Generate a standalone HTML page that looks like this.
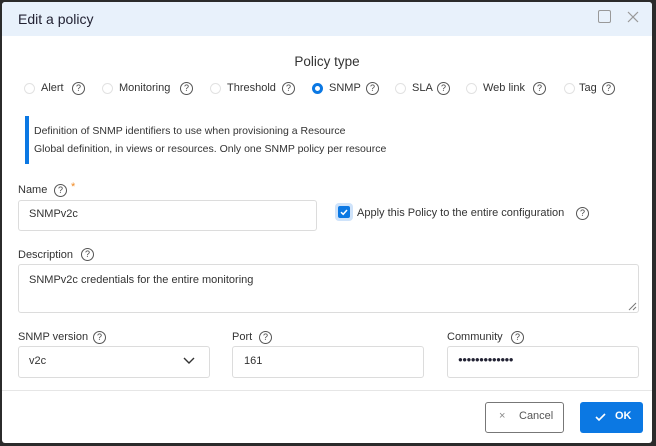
<!DOCTYPE html>
<html><head><style>
*{box-sizing:border-box;margin:0;padding:0}
body{width:656px;height:446px;background:#2b2b2b;font-family:"Liberation Sans",sans-serif;color:#333;font-size:11px;position:relative;overflow:hidden}
.dlg{position:absolute;left:2px;top:2px;width:650px;height:441px;background:#fff;border-radius:3px;overflow:hidden}
.hdr{position:absolute;left:0;top:0;width:100%;height:34px;background:#e8f1fb}
.a{position:absolute;white-space:nowrap}
.q{position:absolute;width:13px;height:13px;border:1px solid #555;border-radius:50%;font-size:9px;line-height:11px;text-align:center;color:#444}
.r{position:absolute;width:11px;height:11px;border:1px solid #e2e2e2;border-radius:50%}
.in{position:absolute;border:1px solid #dcdcdc;border-radius:3px;background:#fff}
</style></head><body>
<div class="dlg">
<div class="hdr"></div>
<div class="a" style="left:16px;top:9px;font-size:14px;color:#223">Edit a policy</div>
<div class="a" style="left:596px;top:8px;width:13px;height:13px;border:1px solid #999;border-radius:2px"></div>
<svg class="a" style="left:625px;top:9px" width="12" height="12"><path d="M1 1L11 11M11 1L1 11" stroke="#999" stroke-width="1.2"/></svg>
<div class="a" style="left:0;width:100%;text-align:center;top:52px;font-size:13.5px;color:#333">Policy type</div>
</div>
<div class="r" style="left:24px;top:83px"></div><div class="a" style="left:41px;top:82px">Alert</div><div class="q" style="left:72px;top:82px">?</div>
<div class="r" style="left:102px;top:83px"></div><div class="a" style="left:119px;top:82px">Monitoring</div><div class="q" style="left:180px;top:82px">?</div>
<div class="r" style="left:210px;top:83px"></div><div class="a" style="left:227px;top:82px">Threshold</div><div class="q" style="left:282px;top:82px">?</div>
<div class="r" style="left:312px;top:83px;border:3px solid #0b78e3"></div><div class="a" style="left:329px;top:82px">SNMP</div><div class="q" style="left:366px;top:82px">?</div>
<div class="r" style="left:395px;top:83px"></div><div class="a" style="left:412px;top:82px">SLA</div><div class="q" style="left:437px;top:82px">?</div>
<div class="r" style="left:466px;top:83px"></div><div class="a" style="left:483px;top:82px">Web link</div><div class="q" style="left:533px;top:82px">?</div>
<div class="r" style="left:564px;top:83px"></div><div class="a" style="left:579px;top:82px">Tag</div><div class="q" style="left:602px;top:82px">?</div>
<div class="a" style="left:25px;top:116px;width:4px;height:48px;background:#0b78e3"></div>
<div class="a" style="left:34px;top:125px;font-size:10.5px">Definition of SNMP identifiers to use when provisioning a Resource</div>
<div class="a" style="left:34px;top:143px;font-size:10.5px">Global definition, in views or resources. Only one SNMP policy per resource</div>
<div class="a" style="left:18px;top:184px">Name</div><div class="q" style="left:54px;top:184px">?</div><div class="a" style="left:71px;top:181px;color:#f08a24">*</div>
<div class="in" style="left:18px;top:200px;width:299px;height:31px"></div><div class="a" style="left:29px;top:208px">SNMPv2c</div>
<div class="a" style="left:335px;top:203px;width:18px;height:18px;border-radius:4px;background:#cfe3fa"></div>
<div class="a" style="left:338px;top:206px;width:12px;height:12px;border-radius:2px;background:#0b78e3"></div>
<svg class="a" style="left:338px;top:206px" width="12" height="12"><path d="M3 6.2L5.2 8.3L9 4" stroke="#fff" stroke-width="1.5" fill="none"/></svg>
<div class="a" style="left:357px;top:207px">Apply this Policy to the entire configuration</div><div class="q" style="left:576px;top:207px">?</div>
<div class="a" style="left:18px;top:249px">Description</div><div class="q" style="left:81px;top:248px">?</div>
<div class="in" style="left:18px;top:264px;width:621px;height:49px"></div><div class="a" style="left:29px;top:274px">SNMPv2c credentials for the entire monitoring</div>
<svg class="a" style="left:628px;top:302px" width="9" height="9"><path d="M1 8L8 1M5 8L8 5" stroke="#777"/></svg>
<div class="a" style="left:18px;top:331px">SNMP version</div><div class="q" style="left:93px;top:331px">?</div>
<div class="a" style="left:232px;top:331px">Port</div><div class="q" style="left:259px;top:331px">?</div>
<div class="a" style="left:447px;top:331px">Community</div><div class="q" style="left:511px;top:331px">?</div>
<div class="in" style="left:18px;top:346px;width:192px;height:32px"></div><div class="a" style="left:29px;top:355px">v2c</div>
<svg class="a" style="left:183px;top:357px" width="12" height="8"><path d="M1 1L6 6L11 1" stroke="#333" stroke-width="1.4" fill="none"/></svg>
<div class="in" style="left:232px;top:346px;width:192px;height:32px"></div><div class="a" style="left:244px;top:355px">161</div>
<div class="in" style="left:447px;top:346px;width:192px;height:32px"></div><div class="a" style="left:458px;top:355px;font-size:8px;color:#223;letter-spacing:-0.6px">●●●●●●●●●●●●●</div>
<div class="a" style="left:2px;top:390px;width:650px;height:1px;background:#e6e6e6"></div>
<div class="a" style="left:485px;top:402px;width:79px;height:31px;border:1px solid #777;border-radius:3px;background:#fff"></div>
<div class="a" style="left:499px;top:410px;color:#888">×</div><div class="a" style="left:519px;top:410px;color:#555">Cancel</div>
<div class="a" style="left:580px;top:402px;width:63px;height:31px;background:#0b78e3;border-radius:3px"></div>
<svg class="a" style="left:595px;top:412px" width="11" height="10"><path d="M1 5L4 8L10 2" stroke="#fff" stroke-width="1.6" fill="none"/></svg>
<div class="a" style="left:615px;top:410px;color:#fff;font-weight:bold">OK</div>
</body></html>
